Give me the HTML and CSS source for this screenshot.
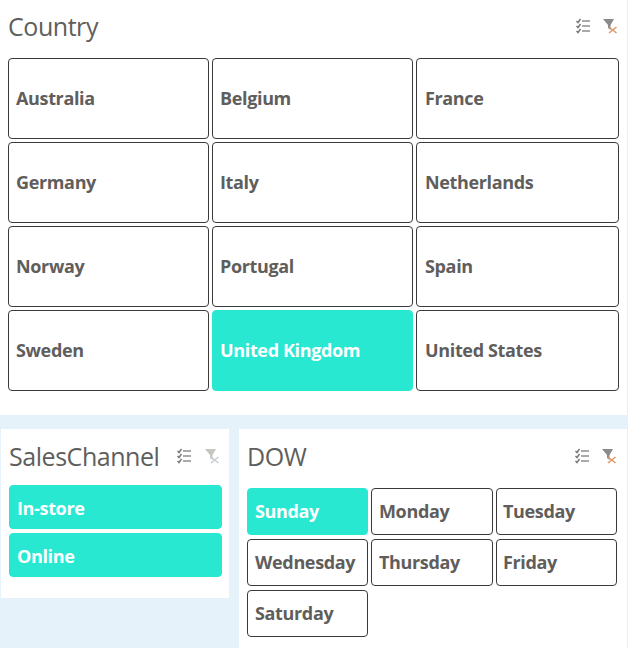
FILE: index.html
```html
<!DOCTYPE html>
<html lang="en">
<head>
<meta charset="utf-8">
<title>Slicers</title>
<link rel="stylesheet" href="styles.css">
</head>
<body>
<svg class="defs" width="0" height="0" aria-hidden="true">
  <symbol id="list" viewBox="0 0 16 16">
    <g fill="none" stroke="#8f8f8f" stroke-width="1.5">
      <path d="M1.5 3l1.5 1.5L5.5 1M1.5 8l1.5 1.5L5.5 6M1.5 13l1.5 1.5L5.5 11" stroke="#7a7a7a"/>
      <path d="M7 3h8M7 8h8M7 13h8"/>
    </g>
  </symbol>
  <symbol id="clear" viewBox="0 0 16 16">
    <path d="M1 1h11L8.5 7v5L6 10V7z" fill="#8a8a8a"/>
    <path d="M7 9l7.5 6M14.5 9L7 15" fill="none" stroke="#dc9a68" stroke-width="1.6"/>
  </symbol>
  <symbol id="clear-off" viewBox="0 0 16 16">
    <path d="M1 1h11L8.5 7v5L6 10V7z" fill="#c6c6c0"/>
    <path d="M7 9l7.5 6M14.5 9L7 15" fill="none" stroke="#c6ced2" stroke-width="1.6"/>
  </symbol>
</svg>
<main class="page">
  <section class="panel country">
    <header class="head">
      <h2 class="title">Country</h2>
      <div class="tools">
        <svg class="icon"><use href="#list"/></svg>
        <svg class="icon"><use href="#clear"/></svg>
      </div>
    </header>
    <div class="grid grid-country">
      <div class="tile">Australia</div>
      <div class="tile">Belgium</div>
      <div class="tile">France</div>
      <div class="tile">Germany</div>
      <div class="tile">Italy</div>
      <div class="tile">Netherlands</div>
      <div class="tile">Norway</div>
      <div class="tile">Portugal</div>
      <div class="tile">Spain</div>
      <div class="tile">Sweden</div>
      <div class="tile on">United Kingdom</div>
      <div class="tile">United States</div>
    </div>
  </section>
  <div class="lower">
    <section class="panel sales">
      <header class="head">
        <h2 class="title">SalesChannel</h2>
        <div class="tools">
          <svg class="icon"><use href="#list"/></svg>
          <svg class="icon"><use href="#clear-off"/></svg>
        </div>
      </header>
      <div class="stack">
        <div class="tile on">In-store</div>
        <div class="tile on">Online</div>
      </div>
    </section>
    <section class="panel dow">
      <header class="head">
        <h2 class="title">DOW</h2>
        <div class="tools">
          <svg class="icon"><use href="#list"/></svg>
          <svg class="icon"><use href="#clear"/></svg>
        </div>
      </header>
      <div class="grid grid-dow">
        <div class="tile on">Sunday</div>
        <div class="tile">Monday</div>
        <div class="tile">Tuesday</div>
        <div class="tile">Wednesday</div>
        <div class="tile">Thursday</div>
        <div class="tile">Friday</div>
        <div class="tile">Saturday</div>
      </div>
    </section>
  </div>
</main>
</body>
</html>
```
FILE: styles.css
```css
* { box-sizing: border-box; }
html, body { margin: 0; height: 100%; }
body {
  background: #e6f2f9;
  font-family: "Open Sans", "Noto Sans", sans-serif;
  overflow: hidden;
}
.defs { display: block; height: 0; }
.page { width: 628px; height: 648px; display: flex; flex-direction: column; }
.panel { background: #fff; }
.head { display: flex; align-items: center; justify-content: space-between; }
.title {
  margin: 0;
  font-weight: 400;
  font-size: 25px;
  line-height: 34px;
  letter-spacing: -0.45px;
  color: #605e5c;
}
.tools { display: flex; gap: 11px; }
.icon { width: 16px; height: 16px; display: block; }
.tile {
  display: flex;
  align-items: center;
  padding: 0 0 2px 7px;
  background: #fff;
  border: 1px solid #3a3a3a;
  border-radius: 4px;
  font-weight: 700;
  font-size: 18px;
  letter-spacing: -0.35px;
  color: #605e5c;
  white-space: nowrap;
}
.tile.on { background: #28e8d2; border-color: #28e8d2; color: #fff; }
.grid { display: grid; }
.country { width: 627px; height: 415px; padding: 9px 9px 0 8px; }
.country .head { height: 34px; margin-bottom: 15px; }
.grid-country {
  grid-template-columns: 201px 201px 203px;
  grid-auto-rows: 81px;
  gap: 3px;
}
.grid-country .tile:nth-child(3n) { padding-left: 8px; }
.lower { margin-top: 14px; padding-left: 1px; display: flex; align-items: flex-start; gap: 10px; }
.sales { width: 228px; height: 169px; padding: 10px 7px 0 8px; }
.sales .head { height: 34px; margin-bottom: 12px; }
.sales .tools { margin-right: 2px; gap: 12px; }
.stack { display: flex; flex-direction: column; gap: 4px; }
.stack .tile { height: 44px; padding: 2px 0 0 7px; }
.dow { width: 388px; height: 219px; padding: 10px 10px 0 8px; }
.dow .head { height: 34px; margin-bottom: 15px; }
.grid-dow {
  grid-template-columns: 121px 122px 121px;
  grid-auto-rows: 47px;
  gap: 4px 3px;
}
.grid-dow .tile:nth-child(3n) { padding-left: 6px; }
```
